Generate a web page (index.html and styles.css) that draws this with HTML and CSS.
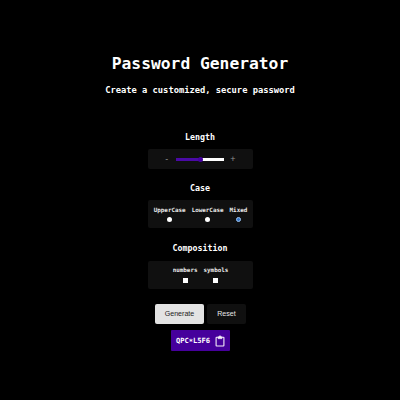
FILE: index.html
```html
<!DOCTYPE html>
<html lang="en">
<head>
<meta charset="utf-8">
<title>Password Generator</title>
<link rel="stylesheet" href="styles.css">
</head>
<body>
<main class="app">
  <h1>Password Generator</h1>
  <p class="subtitle">Create a customized, secure password</p>
  <h2 class="length-title">Length</h2>
  <section class="panel length">
    <span class="step minus">-</span>
    <div class="slider"><div class="fill"></div><div class="thumb"></div></div>
    <span class="step plus">+</span>
  </section>
  <h2 class="case-title">Case</h2>
  <section class="panel case">
    <div class="option"><span>UpperCase</span><i class="radio"></i></div>
    <div class="option"><span>LowerCase</span><i class="radio"></i></div>
    <div class="option"><span>Mixed</span><i class="radio checked"></i></div>
  </section>
  <h2 class="comp-title">Composition</h2>
  <section class="panel comp">
    <div class="option"><span>numbers</span><i class="check"></i></div>
    <div class="option"><span>symbols</span><i class="check"></i></div>
  </section>
  <div class="actions">
    <button class="generate">Generate</button>
    <button class="reset">Reset</button>
  </div>
  <div class="result">
    <span>QPC<span class="star">*</span>L5F6</span>
    <svg width="10" height="12" viewBox="0 0 10 12" fill="none" stroke="#f3edf8">
      <path d="M3 2.2H1.7a.6.6 0 0 0-.6.6v7.6a.6.6 0 0 0 .6.6h6.6a.6.6 0 0 0 .6-.6V2.8a.6.6 0 0 0-.6-.6H7" stroke-width="1.1"/>
      <path d="M3 1.7h1a1 1 0 0 1 2 0h1v2H3z" fill="#f3edf8" stroke-width=".5"/>
    </svg>
  </div>
</main>
</body>
</html>
```
FILE: styles.css
```css
* { box-sizing: border-box; }
body {
  margin: 0;
  background: #000;
  color: #fff;
  font-family: "DejaVu Sans Mono", "Liberation Mono", monospace;
  font-weight: 700;
}
.app {
  height: 400px;
  padding-top: 54px;
  display: flex;
  flex-direction: column;
  align-items: center;
}
h1, h2, p { margin: 0; white-space: pre; }
h1 { font-size: 16.3px; line-height: 20px; }
.subtitle { margin-top: 10px; font-size: 8.75px; line-height: 12px; }
h2 { font-size: 8.3px; line-height: 12px; }
.length-title { margin-top: 35px; }
.case-title { margin-top: 13px; }
.comp-title { margin-top: 14px; }
.panel {
  width: 105px;
  background: #101010;
  border-radius: 2px;
  display: flex;
  justify-content: center;
  margin-left: 1px;
}
.length { height: 20px; margin-top: 6px; align-items: center; }
.step {
  font: 400 9px/10px "Liberation Sans", sans-serif;
  color: #8f8f8f;
}
.minus { margin-right: 8px; }
.plus { margin-left: 6px; }
.slider {
  width: 48px;
  height: 5px;
  display: flex;
  align-items: center;
  background: linear-gradient(#fff, #fff) center / 100% 3px no-repeat;
}
.fill { width: 24px; height: 3px; background: #4a0aa5; }
.thumb { width: 5px; height: 5px; margin-left: -2px; border-radius: 50%; background: #4600a0; }
.case { height: 28px; margin-top: 6px; padding-top: 6px; gap: 6px; }
.comp { height: 28px; margin-top: 7px; padding-top: 5px; gap: 6px; }
.option {
  display: flex;
  flex-direction: column;
  align-items: center;
  font-size: 5.9px;
  line-height: 8px;
  color: #eee;
}
.radio { width: 5px; height: 5px; margin-top: 3px; border-radius: 50%; background: #fff; }
.radio.checked { background: #3576c8; border: 1px solid #9cc4f2; }
.check { width: 5px; height: 5px; margin-top: 4px; background: #fff; }
.actions { display: flex; gap: 3px; margin-top: 15px; margin-left: 1px; }
button {
  height: 20px;
  padding: 1px 0 0;
  border: 0;
  border-radius: 2px;
  font: 400 7.1px/19px "Liberation Sans", sans-serif;
}
.generate { width: 49px; background: #e3e3e3; color: #222; }
.reset { width: 39px; background: #101010; color: #e6e6e6; }
.result {
  width: 59px;
  height: 21px;
  margin-top: 6px;
  margin-left: 1px;
  display: flex;
  align-items: center;
  justify-content: center;
  gap: 5px;
  border-radius: 1px;
  background: #46009c;
  font-size: 7.1px;
}
.star { position: relative; top: 1px; }
```
